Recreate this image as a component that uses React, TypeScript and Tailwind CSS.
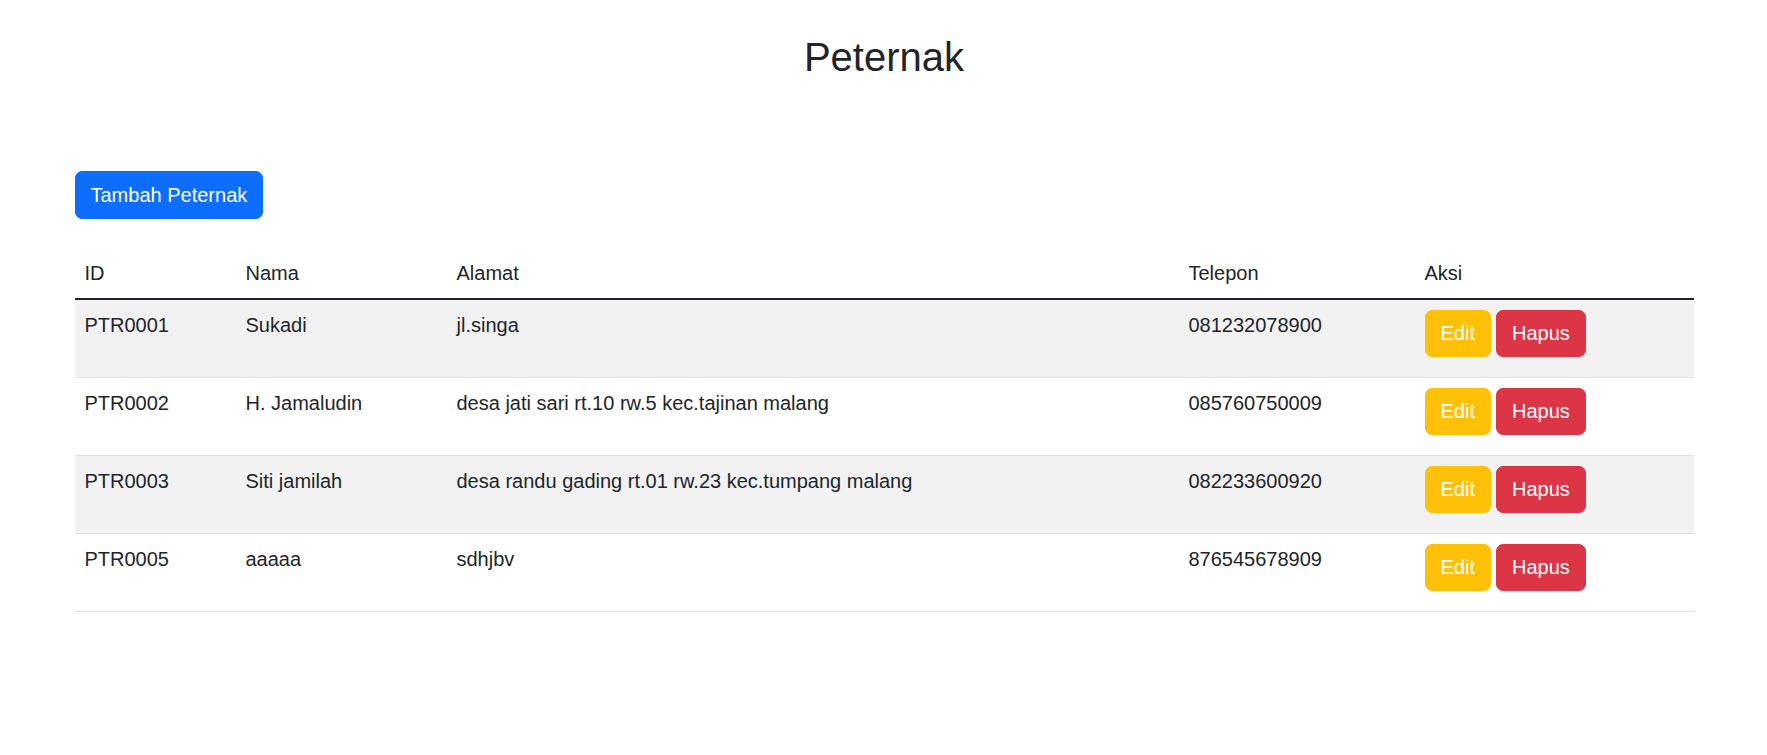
import React from "react";

const rows = [
  { id: "PTR0001", nama: "Sukadi", alamat: "jl.singa", telp: "081232078900" },
  { id: "PTR0002", nama: "H. Jamaludin", alamat: "desa jati sari rt.10 rw.5 kec.tajinan malang", telp: "085760750009" },
  { id: "PTR0003", nama: "Siti jamilah", alamat: "desa randu gading rt.01 rw.23 kec.tumpang malang", telp: "082233600920" },
  { id: "PTR0005", nama: "aaaaa", alamat: "sdhjbv", telp: "876545678909" },
];

export default function App() {
  return (
    <div className="min-h-screen bg-white text-[#212529] text-[20px] leading-[30px]" style={{ fontFamily: '"Liberation Sans", Arial, sans-serif' }}>
      <div className="mx-auto w-[1650px] pl-[16px] pr-[15px]">
        <h1 className="mt-[33px] text-center text-[40px] leading-[48px] font-normal">Peternak</h1>
        <button className="mt-[90px] h-[47.5px] rounded-[7px] border-[1.25px] border-[#0d6efd] bg-[#0d6efd] px-[15px] text-white">
          Tambah Peternak
        </button>
        <table className="mt-[29px] w-full table-fixed border-collapse">
          <colgroup>
            <col className="w-[161px]" />
            <col className="w-[211px]" />
            <col className="w-[732px]" />
            <col className="w-[236px]" />
            <col />
          </colgroup>
          <thead>
            <tr className="border-b-[2.5px] border-[#212529]">
              <th className="px-[10px] py-[10px] text-left font-normal">ID</th>
              <th className="px-[10px] py-[10px] text-left font-normal">Nama</th>
              <th className="px-[10px] py-[10px] text-left font-normal">Alamat</th>
              <th className="px-[10px] py-[10px] text-left font-normal">Telepon</th>
              <th className="px-[10px] py-[10px] text-left font-normal">Aksi</th>
            </tr>
          </thead>
          <tbody>
            {rows.map((r, i) => (
              <tr key={r.id} className={`border-b border-[#dee2e6] ${i % 2 === 0 ? "bg-[#f2f2f2]" : "bg-white"}`}>
                <td className="px-[10px] py-[10px] align-top"><div className="h-[57px]">{r.id}</div></td>
                <td className="px-[10px] py-[10px] align-top"><div className="h-[57px]">{r.nama}</div></td>
                <td className="px-[10px] py-[10px] align-top"><div className="h-[57px]">{r.alamat}</div></td>
                <td className="px-[10px] py-[10px] align-top"><div className="h-[57px]">{r.telp}</div></td>
                <td className="px-[10px] py-[10px] align-top">
                  <div className="flex h-[57px] items-start gap-[5px]">
                    <button className="h-[47.5px] rounded-[7px] border-[1.25px] border-[#ffc107] bg-[#ffc107] px-[15px] text-white">Edit</button>
                    <button className="h-[47.5px] rounded-[7px] border-[1.25px] border-[#dc3545] bg-[#dc3545] px-[15px] text-white">Hapus</button>
                  </div>
                </td>
              </tr>
            ))}
          </tbody>
        </table>
      </div>
    </div>
  );
}
